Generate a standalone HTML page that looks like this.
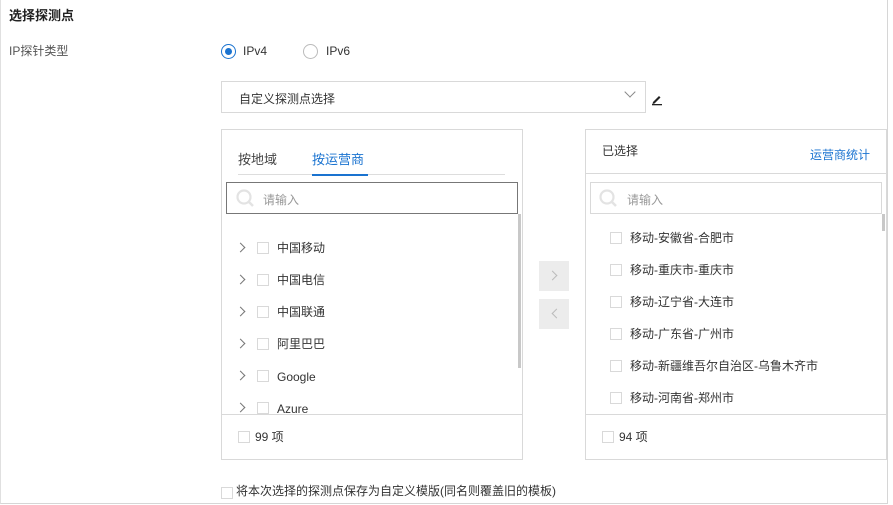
<!DOCTYPE html>
<html><head><meta charset="utf-8"><style>
*{margin:0;padding:0;box-sizing:border-box}
body{width:893px;height:505px;background:#fff;position:relative;overflow:hidden;font-family:"Liberation Sans","Noto Sans CJK SC",sans-serif;color:#333;font-size:12px}
.a{position:absolute;white-space:nowrap}
.box{position:absolute;border:1px solid #d9d9d9}
.cb{position:absolute;width:12px;height:12px;border:1px solid #d9d9d9;background:#fff}
.t{position:absolute;font-size:12px;color:#333;line-height:14px}
.arr{position:absolute;width:7px;height:7px;border-right:1.5px solid #777;border-top:1.5px solid #777;transform:rotate(45deg)}
</style></head><body>
<div style="position:absolute;left:0;top:0;width:888px;height:504px;border:1px solid #d6d6d6;border-top:none;border-left:1px solid #e0e0e0"></div>
<div class="a" style="left:9px;top:5px;font-size:13px;font-weight:bold;color:#222">选择探测点</div>
<div class="a" style="left:9px;top:42px;font-size:12px;color:#555">IP探针类型</div>
<div style="position:absolute;left:221px;top:44px;width:15px;height:15px;border:1px solid #1a73d0;border-radius:50%"><div style="position:absolute;left:3px;top:3px;width:7px;height:7px;background:#1a73d0;border-radius:50%"></div></div>
<div class="a" style="left:243px;top:44px;font-size:12px">IPv4</div>
<div style="position:absolute;left:303px;top:44px;width:15px;height:15px;border:1px solid #bbb;border-radius:50%"></div>
<div class="a" style="left:326px;top:44px;font-size:12px">IPv6</div>
<div class="box" style="left:221px;top:81px;width:425px;height:32px"></div>
<div class="a" style="left:239px;top:90px;font-size:12px">自定义探测点选择</div>
<div style="position:absolute;left:626px;top:88px;width:8px;height:8px;border-right:1.5px solid #888;border-bottom:1.5px solid #888;transform:rotate(45deg)"></div>
<svg class="a" style="left:650px;top:94px" width="14" height="12"><path d="M3 8 L9 2 L10.5 3.5 L4.5 9.5 L2.5 10 Z" fill="#222"/><rect x="2" y="10" width="10" height="1.3" fill="#222"/></svg>

<div class="box" style="left:221px;top:129px;width:302px;height:331px"></div>
<div class="a" style="left:238px;top:149px;font-size:13px;color:#444">按地域</div>
<div class="a" style="left:312px;top:149px;font-size:13px;color:#1a73d0">按运营商</div>
<div style="position:absolute;left:238px;top:174px;width:267px;height:1px;background:#ddd"></div>
<div style="position:absolute;left:312px;top:174px;width:56px;height:2px;background:#1a73d0"></div>
<div style="position:absolute;left:226px;top:182px;width:292px;height:32px;border:1px solid #777;background:#fff"></div>
<svg class="a" style="left:235px;top:188px" width="20" height="20"><circle cx="9" cy="9" r="6.5" fill="none" stroke="#e3e3e3" stroke-width="2.2"/><path d="M13.5 13.5 L18 18" stroke="#e3e3e3" stroke-width="2.5"/></svg>
<div class="a" style="left:263px;top:191px;font-size:12px;color:#999">请输入</div>
<div style="position:absolute;left:518px;top:214px;width:3px;height:154px;background:#c8c8c8"></div>

<div class="arr" style="left:237px;top:244px"></div><div class="cb" style="left:257px;top:242px"></div><div class="t" style="left:277px;top:241px">中国移动</div>
<div class="arr" style="left:237px;top:276px"></div><div class="cb" style="left:257px;top:274px"></div><div class="t" style="left:277px;top:273px">中国电信</div>
<div class="arr" style="left:237px;top:308px"></div><div class="cb" style="left:257px;top:306px"></div><div class="t" style="left:277px;top:305px">中国联通</div>
<div class="arr" style="left:237px;top:340px"></div><div class="cb" style="left:257px;top:338px"></div><div class="t" style="left:277px;top:337px">阿里巴巴</div>
<div class="arr" style="left:237px;top:372px"></div><div class="cb" style="left:257px;top:370px"></div><div class="t" style="left:277px;top:370px">Google</div>
<div class="arr" style="left:237px;top:404px"></div><div class="cb" style="left:257px;top:402px"></div><div class="t" style="left:277px;top:402px">Azure</div>
<div style="position:absolute;left:222px;top:414px;width:300px;height:45px;background:#fff;border-top:1px solid #d9d9d9"></div>
<div class="cb" style="left:238px;top:431px"></div><div class="t" style="left:255px;top:430px">99 项</div>

<div style="position:absolute;left:539px;top:261px;width:30px;height:30px;background:#ececec"></div>
<div style="position:absolute;left:549px;top:272px;width:7px;height:7px;border-right:1.3px solid #bbb;border-top:1.3px solid #bbb;transform:rotate(45deg)"></div>
<div style="position:absolute;left:539px;top:299px;width:30px;height:30px;background:#ececec"></div>
<div style="position:absolute;left:553px;top:310px;width:7px;height:7px;border-left:1.3px solid #bbb;border-bottom:1.3px solid #bbb;transform:rotate(45deg)"></div>

<div class="box" style="left:585px;top:129px;width:302px;height:331px"></div>
<div class="a" style="left:602px;top:142px;font-size:12px">已选择</div>
<div class="a" style="left:810px;top:146px;font-size:12px;color:#1a73d0">运营商统计</div>
<div style="position:absolute;left:586px;top:173px;width:300px;height:1px;background:#d9d9d9"></div>
<div style="position:absolute;left:590px;top:182px;width:292px;height:32px;border:1px solid #d9d9d9"></div>
<svg class="a" style="left:598px;top:188px" width="20" height="20"><circle cx="9" cy="9" r="6.5" fill="none" stroke="#e3e3e3" stroke-width="2.2"/><path d="M13.5 13.5 L18 18" stroke="#e3e3e3" stroke-width="2.5"/></svg>
<div class="a" style="left:627px;top:191px;font-size:12px;color:#999">请输入</div>
<div style="position:absolute;left:882px;top:214px;width:3px;height:17px;background:#c8c8c8"></div>
<div class="cb" style="left:610px;top:232px"></div><div class="t" style="left:630px;top:231px">移动-安徽省-合肥市</div>
<div class="cb" style="left:610px;top:264px"></div><div class="t" style="left:630px;top:263px">移动-重庆市-重庆市</div>
<div class="cb" style="left:610px;top:296px"></div><div class="t" style="left:630px;top:295px">移动-辽宁省-大连市</div>
<div class="cb" style="left:610px;top:328px"></div><div class="t" style="left:630px;top:327px">移动-广东省-广州市</div>
<div class="cb" style="left:610px;top:360px"></div><div class="t" style="left:630px;top:359px">移动-新疆维吾尔自治区-乌鲁木齐市</div>
<div class="cb" style="left:610px;top:392px"></div><div class="t" style="left:630px;top:391px">移动-河南省-郑州市</div>
<div style="position:absolute;left:586px;top:414px;width:300px;height:45px;background:#fff;border-top:1px solid #d9d9d9"></div>
<div class="cb" style="left:602px;top:431px"></div><div class="t" style="left:619px;top:430px">94 项</div>

<div class="cb" style="left:221px;top:487px"></div>
<div class="a" style="left:236px;top:482px;font-size:12px">将本次选择的探测点保存为自定义模版(同名则覆盖旧的模板)</div>
</body></html>
